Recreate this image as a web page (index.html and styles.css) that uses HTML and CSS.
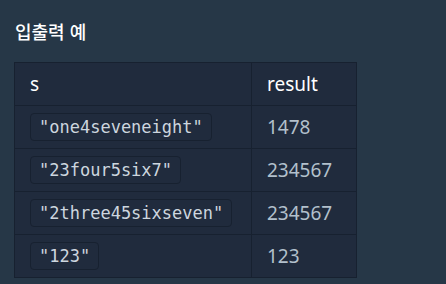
FILE: index.html
```html
<!DOCTYPE html>
<html lang="ko">
<head>
<meta charset="utf-8">
<link rel="stylesheet" href="styles.css">
</head>
<body>
<section class="example">
  <h5 class="title">입출력 예</h5>
  <table class="io-table">
    <thead>
      <tr><th class="col-s">s</th><th class="col-r">result</th></tr>
    </thead>
    <tbody>
      <tr><td><code>"one4seveneight"</code></td><td>1478</td></tr>
      <tr><td><code>"23four5six7"</code></td><td>234567</td></tr>
      <tr><td><code>"2three45sixseven"</code></td><td>234567</td></tr>
      <tr><td><code>"123"</code></td><td>123</td></tr>
    </tbody>
  </table>
</section>
</body>
</html>
```
FILE: styles.css
```css
html, body {
  margin: 0;
  padding: 0;
  background: #263747;
}
body {
  font-family: "Noto Sans", "Noto Sans CJK KR", sans-serif;
  color: #ffffff;
}
.example {
  padding: 19px 14px 0 14px;
}
.title {
  margin: 0 0 19px 1px;
  font-family: "Noto Sans CJK KR", sans-serif;
  font-size: 18px;
  font-weight: 500;
  line-height: 24px;
  color: #ffffff;
}
.io-table {
  border-collapse: collapse;
  background: #202b3d;
  border: 1px solid #172130;
  table-layout: fixed;
  width: 342px;
}
.io-table th,
.io-table td {
  border: 1px solid #172130;
  height: 43px;
  padding: 0 0 0 15px;
  text-align: left;
  vertical-align: middle;
  box-sizing: border-box;
}
.io-table th {
  font-size: 19px;
  font-weight: 400;
  color: #ffffff;
}
.io-table td {
  font-size: 19px;
  color: #b2c0cc;
}
.col-s { width: 237px; }
.col-r { width: 105px; }
code {
  display: inline-block;
  font-family: "DejaVu Sans Mono", monospace;
  font-size: 17px;
  line-height: 20px;
  color: #cdd6df;
  background: #202b3d;
  border: 1px solid #172130;
  border-radius: 4px;
  padding: 3px 8px;
}
```
